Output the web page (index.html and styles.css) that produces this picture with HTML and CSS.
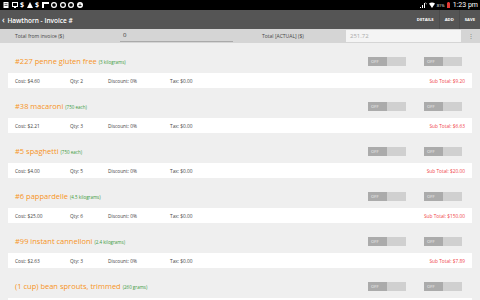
FILE: index.html
```html
<!DOCTYPE html>
<html lang="en">
<head>
    <meta charset="UTF-8">
    <title>Hawthorn - Invoice #</title>
    <link rel="stylesheet" href="styles.css">
</head>
<body>
    <!-- status bar -->
    <div class="status-bar">
        <div class="status-icons">
            <svg width="6" height="6" viewBox="0 0 6 6"><rect x="0.5" y="0" width="5" height="6" fill="#fff"/><rect x="1.5" y="1.5" width="3" height="0.6" fill="#000"/><rect x="1.5" y="3" width="3" height="0.6" fill="#000"/></svg>
            <svg width="6" height="6" viewBox="0 0 6 6"><rect x="0.5" y="0.5" width="5" height="4" fill="none" stroke="#fff"/><rect x="2" y="4.5" width="2" height="1.5" fill="#fff"/></svg>
            <span class="glyph">$</span>
            <svg width="6" height="6" viewBox="0 0 6 6"><polygon points="3,0 6,6 0,6" fill="#fff"/></svg>
            <span class="glyph">$</span>
            <svg width="7" height="6" viewBox="0 0 7 6"><rect x="0" y="0" width="7" height="6" fill="#fff"/><rect x="2" y="2" width="5" height="4" fill="#000"/></svg>
            <svg width="6" height="6" viewBox="0 0 6 6"><circle cx="3" cy="3" r="2.4" fill="none" stroke="#fff" stroke-width="1.2"/></svg>
            <svg width="6" height="6" viewBox="0 0 6 6"><circle cx="3" cy="3" r="2.4" fill="none" stroke="#fff" stroke-width="1.2"/></svg>
            <svg width="6" height="6" viewBox="0 0 6 6"><circle cx="3" cy="3" r="2.4" fill="none" stroke="#fff" stroke-width="1.2"/></svg>
            <svg width="6" height="6" viewBox="0 0 6 6"><circle cx="3" cy="3" r="3" fill="#fff"/><path d="M1.5 3.5h3M3 1.5v3" stroke="#000" stroke-width="0.8"/></svg>
        </div>
        <div class="status-right">
            <svg width="7" height="6" viewBox="0 0 7 6"><path d="M0 5h1v1H0zM2 3h1v3H2zM4 1h1v5H4z" fill="#fff"/><path d="M5.5 0.5l1.5 2" stroke="#fff" stroke-width="0.6"/></svg>
            <svg width="6" height="6" viewBox="0 0 6 6"><path d="M0 1.5Q3 -0.5 6 1.5L3 6z" fill="#fff"/></svg>
            <span class="pct">81%</span>
            <svg width="3" height="6" viewBox="0 0 3 6"><rect x="0" y="0.5" width="3" height="5.5" fill="#e53935"/><rect x="1" y="0" width="1" height="1" fill="#e53935"/></svg>
            <span class="clock">1:23 pm</span>
        </div>
    </div>

    <!-- action bar -->
    <div class="action-bar">
        <div class="title"><span class="back">&lsaquo;</span> Hawthorn - Invoice #</div>
        <div class="actions">
            <span class="action">DETAILS</span>
            <span class="action">ADD</span>
            <span class="action">SAVE</span>
        </div>
    </div>

    <!-- totals -->
    <div class="totals">
        <span class="totals-label first">Total from invoice ($)</span>
        <span class="totals-field">0</span>
        <span class="totals-label second">Total [ACTUAL] ($)</span>
        <span class="totals-box">251.72</span>
        <span class="overflow">&#8942;</span>
    </div>

    <div class="items">
        <div class="item">
            <div class="item-head">
                <div class="item-name">#227 penne gluten free <small>(3 kilograms)</small></div>
                <div class="toggle"><span>OFF</span></div>
                <div class="toggle"><span>OFF</span></div>
            </div>
            <div class="item-row">
                <span>Cost: $4.60</span><span>Qty: 2</span><span>Discount: 0%</span><span>Tax: $0.00</span>
                <span class="subtotal">Sub Total: $9.20</span>
            </div>
        </div>
        <div class="item">
            <div class="item-head">
                <div class="item-name">#38 macaroni <small>(750 each)</small></div>
                <div class="toggle"><span>OFF</span></div>
                <div class="toggle"><span>OFF</span></div>
            </div>
            <div class="item-row">
                <span>Cost: $2.21</span><span>Qty: 3</span><span>Discount: 0%</span><span>Tax: $0.00</span>
                <span class="subtotal">Sub Total: $6.63</span>
            </div>
        </div>
        <div class="item">
            <div class="item-head">
                <div class="item-name">#5 spaghetti <small>(750 each)</small></div>
                <div class="toggle"><span>OFF</span></div>
                <div class="toggle"><span>OFF</span></div>
            </div>
            <div class="item-row">
                <span>Cost: $4.00</span><span>Qty: 5</span><span>Discount: 0%</span><span>Tax: $0.00</span>
                <span class="subtotal">Sub Total: $20.00</span>
            </div>
        </div>
        <div class="item">
            <div class="item-head">
                <div class="item-name">#6 pappardelle <small>(4.5 kilograms)</small></div>
                <div class="toggle"><span>OFF</span></div>
                <div class="toggle"><span>OFF</span></div>
            </div>
            <div class="item-row">
                <span>Cost: $25.00</span><span>Qty: 6</span><span>Discount: 0%</span><span>Tax: $0.00</span>
                <span class="subtotal">Sub Total: $150.00</span>
            </div>
        </div>
        <div class="item">
            <div class="item-head">
                <div class="item-name">#99 instant cannelloni <small>(2.4 kilograms)</small></div>
                <div class="toggle"><span>OFF</span></div>
                <div class="toggle"><span>OFF</span></div>
            </div>
            <div class="item-row">
                <span>Cost: $2.63</span><span>Qty: 3</span><span>Discount: 0%</span><span>Tax: $0.00</span>
                <span class="subtotal">Sub Total: $7.89</span>
            </div>
        </div>
        <div class="item">
            <div class="item-head">
                <div class="item-name">(1 cup) bean sprouts, trimmed <small>(260 grams)</small></div>
                <div class="toggle"><span>OFF</span></div>
                <div class="toggle"><span>OFF</span></div>
            </div>
            <!-- only the top edge of this row is on screen -->
            <div class="item-row"></div>
        </div>
    </div>
</body>
</html>
```
FILE: styles.css
```css
body { margin: 0; width: 480px; height: 300px; overflow: hidden; background: #efefef; font-family: "Open Sans", "Noto Sans", sans-serif; }

/* status bar */
.status-bar { height: 10px; background: #000; color: #fff; display: flex; justify-content: space-between; align-items: center; padding: 0 2px 0 3px; }
.status-icons { display: flex; align-items: center; gap: 2.5px; }
.status-icons svg { display: block; }
.glyph { font-size: 7px; font-weight: bold; line-height: 6px; }
.status-right { display: flex; align-items: center; gap: 2px; }
.status-right svg { display: block; }
.pct { font-size: 4px; }
.clock { font-size: 7px; margin-left: 1px; font-family: "Roboto", sans-serif; }

/* action bar */
.action-bar { height: 19px; background: #555; color: #fff; display: flex; justify-content: space-between; align-items: center; }
.title { font-size: 6.5px; font-weight: 600; padding-left: 2px; }
.back { font-size: 8px; margin-right: 1px; }
.actions { display: flex; height: 100%; }
.action { font-size: 4.2px; font-weight: bold; display: flex; align-items: center; padding: 0 5px; border-left: 1px solid #4b4b4b; }
.action:first-child { border-left: none; }

/* totals */
.totals { height: 14px; background: #d5d5d5; display: flex; align-items: center; font-size: 5px; color: #444; }
.totals-label.first { width: 105px; padding-left: 15px; }
.totals-field { width: 110px; padding-left: 3px; font-size: 6px; color: #333; border-bottom: 1px solid #aaa; align-self: flex-end; height: 12px; line-height: 12px; margin-bottom: 1px; }
.totals-label.second { width: 84px; margin-left: 29px; }
.totals-box { width: 111px; padding-left: 4px; height: 12px; line-height: 12px; background: #f4f4f4; color: #aaa; font-size: 6px; }
.overflow { flex: 1; text-align: center; color: #777; font-size: 6px; }

/* items */
.items { padding: 0 8px; }
.item-head { height: 30px; display: flex; align-items: center; padding: 6px 10px 0 7px; box-sizing: border-box; }
.item-name { flex: 1; color: #f7941d; font-size: 7.5px; }
.item-name small { color: #3c9a3c; font-size: 4.5px; }
.toggle { width: 38px; height: 9px; background: #d0d0d0; margin-left: 18px; }
.toggle span { display: block; width: 19px; height: 9px; line-height: 9px; background: #ababab; color: #eee; font-size: 4.2px; padding-left: 3px; box-sizing: border-box; }
.item-row { height: 15px; background: #fff; display: flex; align-items: center; padding: 0 7px; font-size: 4.8px; color: #444; }
.item-row span:nth-child(1) { width: 55px; }
.item-row span:nth-child(2) { width: 38px; }
.item-row span:nth-child(3) { width: 62px; }
.item-row .subtotal { margin-left: auto; color: #f0454a; }
```
